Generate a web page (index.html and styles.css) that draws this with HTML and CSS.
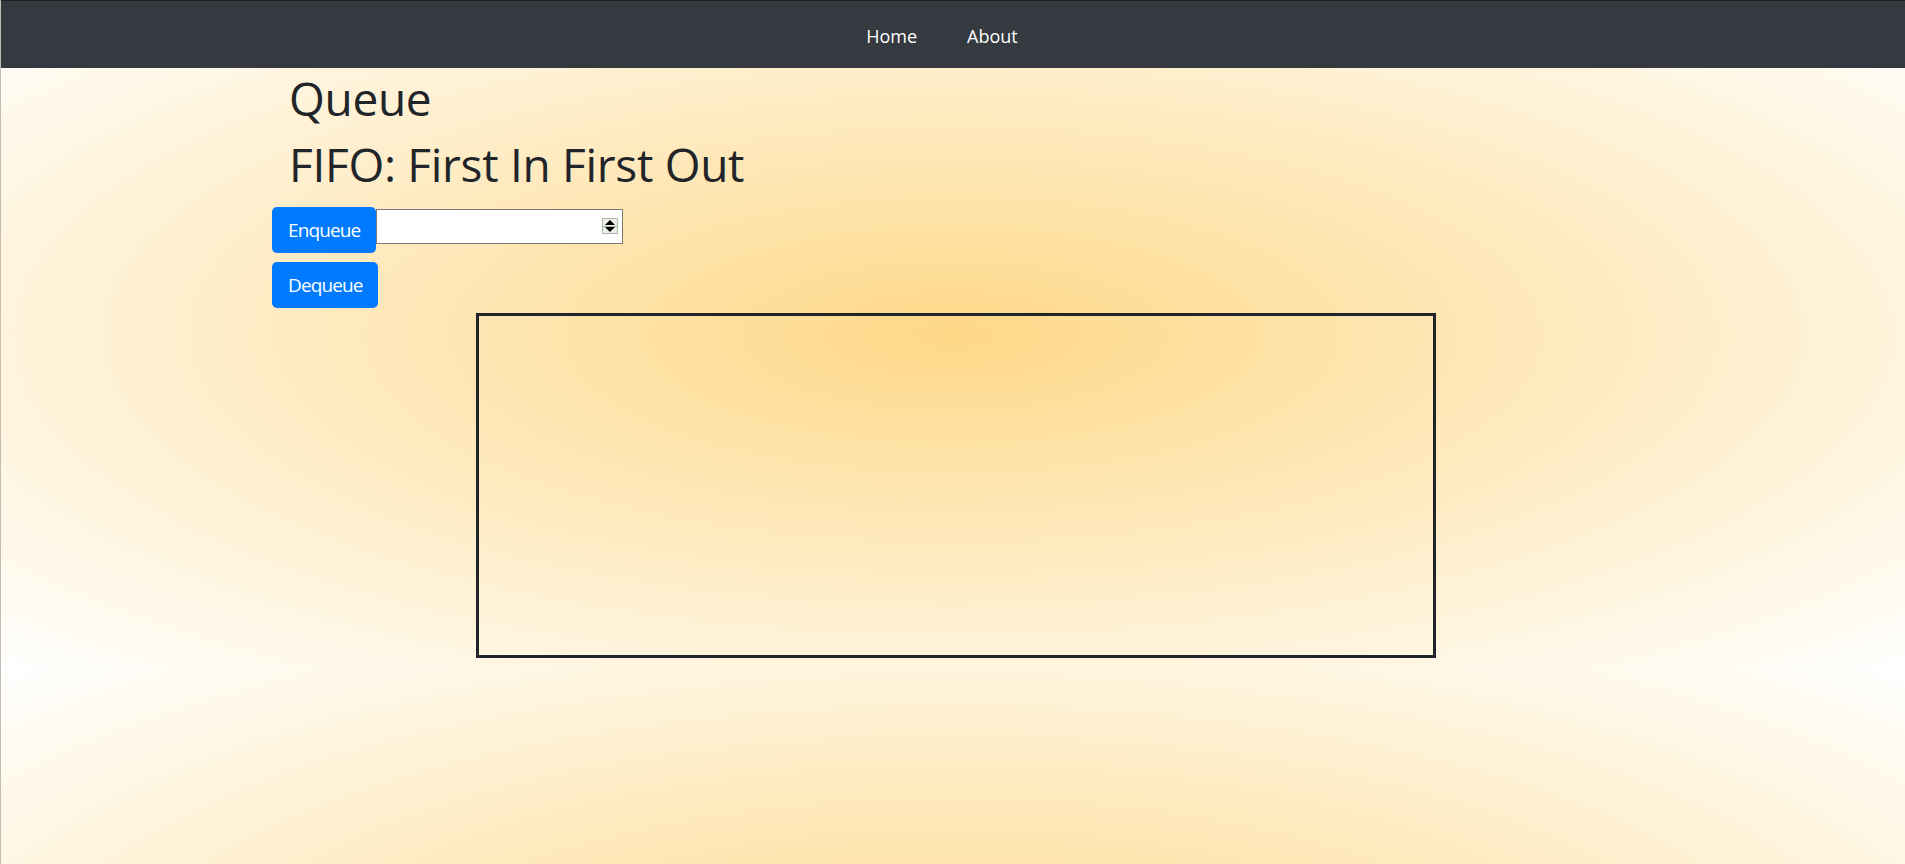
FILE: index.html
```html
<!DOCTYPE html>
<html lang="en">
<head>
<meta charset="utf-8">
<title>Queue</title>
<link rel="stylesheet" href="styles.css">
</head>
<body>
<nav class="navbar">
  <a class="nav-link" href="#">Home</a>
  <a class="nav-link" href="#">About</a>
</nav>
<main class="page">
  <h1 class="title">Queue</h1>
  <h1 class="title">FIFO: First In First Out</h1>
  <div class="controls">
    <div class="control-row">
      <button class="btn">Enqueue</button>
      <div class="num-field">
        <input class="num-input" type="text" aria-label="value">
        <span class="spinner"><span class="spin-half"><span class="spin-up"></span></span><span class="spin-half spin-half-low"><span class="spin-down"></span></span></span>
      </div>
    </div>
    <div class="control-row">
      <button class="btn">Dequeue</button>
    </div>
  </div>
  <div class="queue-box"></div>
</main>
</body>
</html>
```

FILE: styles.css
```css
html {
  margin: 0;
  min-height: 100%;
  border-left: 1px solid #c4beb2;
  background: radial-gradient(ellipse farthest-corner at 50% 50%, #fed888 0%, #ffffff 100%) 0 0 / 100% 670px repeat;
}

body {
  margin: 0;
  font-family: "Open Sans", "Noto Sans", sans-serif;
  color: #212529;
}

.navbar {
  box-sizing: border-box;
  height: 68px;
  border-top: 1px solid #1d2024;
  background: #343a40;
  display: flex;
  justify-content: center;
  align-items: center;
  gap: 50px;
  padding-right: 22px;
  padding-top: 2px;
}

.nav-link {
  color: #ffffff;
  text-decoration: none;
  font-size: 18px;
  line-height: 24px;
}

.page {
  padding-top: 2px;
}

.title {
  margin: 0 0 8px 288px;
  font-size: 46px;
  letter-spacing: -0.3px;
  font-weight: 400;
  line-height: 57.6px;
}

.controls {
  margin: 14px 0 0 271px;
  display: flex;
  flex-direction: column;
  gap: 9px;
}

.control-row {
  display: flex;
  align-items: flex-start;
}

.btn {
  font-family: inherit;
  font-size: 19px;
  letter-spacing: -0.9px;
  line-height: 30px;
  padding: 8px 16px;
  border: none;
  border-radius: 5px;
  background: #007bff;
  color: #ffffff;
}

.num-field {
  position: relative;
  margin-top: 2px;
}

.num-input {
  box-sizing: border-box;
  width: 247px;
  height: 35px;
  margin: 0;
  border: 1px solid #7a7a7a;
  background: #ffffff;
  font-family: inherit;
  font-size: 16px;
  padding: 0 26px 0 4px;
}

.spinner {
  position: absolute;
  right: 5px;
  top: 9px;
  width: 16px;
  height: 16px;
  box-sizing: border-box;
  border: 1px solid #a6bab0;
  background: #efeee4;
  display: flex;
  flex-direction: column;
}

.spin-half {
  flex: 1;
  display: flex;
  align-items: center;
  justify-content: center;
}

.spin-half-low {
  border-top: 1px solid #a6bab0;
}

.spin-up,
.spin-down {
  width: 0;
  height: 0;
  border-left: 5px solid transparent;
  border-right: 5px solid transparent;
}

.spin-up {
  border-bottom: 5px solid #000000;
}

.spin-down {
  border-top: 5px solid #000000;
}

.queue-box {
  box-sizing: border-box;
  width: 960px;
  height: 345px;
  margin: 5px 0 0 475px;
  border: 3px solid #212529;
}
```
